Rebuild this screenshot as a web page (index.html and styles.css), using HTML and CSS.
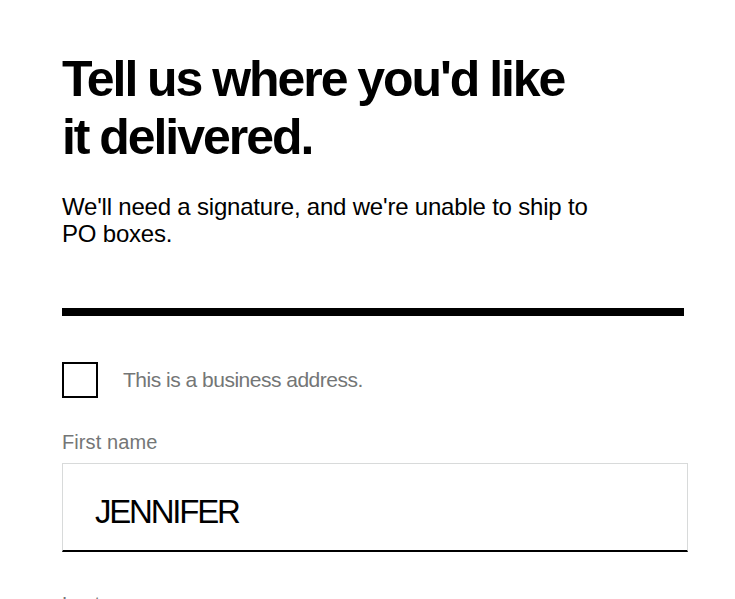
FILE: index.html
```html
<!DOCTYPE html>
<html lang="en">
  <head>
    <meta charset="UTF-8" />
    <meta name="viewport" content="width=device-width, initial-scale=1.0" />
    <title>Shipping Address</title>
    <link rel="stylesheet" href="styles.css">
  </head>

  <body>
    <main class="shipping">
      <h1 class="shipping-title">Tell us where you'd like<br />it delivered.</h1>
      <p class="shipping-note">We'll need a signature, and we're unable to ship to<br />PO boxes.</p>

      <hr class="divider" />

      <form class="address-form" action="" name="address_form">
        <label class="check-row" for="business">
          <input type="checkbox" id="business" name="business" class="check-box" />
          <span class="check-text">This is a business address.</span>
        </label>

        <div class="field">
          <label class="field-label" for="first_name">First name</label>
          <input class="field-input" type="text" id="first_name" name="first_name" value="JENNIFER" />
        </div>

        <div class="field">
          <label class="field-label" for="last_name">Last name</label>
          <input class="field-input" type="text" id="last_name" name="last_name" value="" />
        </div>
      </form>
    </main>
  </body>
</html>
```

FILE: styles.css
```css
:root {
  box-sizing: border-box;
  --ink: #000;
  --muted: #747676;
  --line: #d8dada;
}
*,
*::before,
*::after {
  box-sizing: inherit;
}
body {
  margin: 0;
  background: #fff;
  color: var(--ink);
  font-family: "Liberation Sans", Arial, sans-serif;
}
.shipping {
  width: 626px;
  margin: 0 0 0 62px;
  padding-top: 50px;
}
.shipping-title {
  margin: 0;
  font-size: 50px;
  line-height: 58px;
  font-weight: 700;
  letter-spacing: -2.05px;
  word-spacing: -1px;
}
.shipping-note {
  margin: 27px 0 0;
  font-size: 24px;
  line-height: 27px;
  letter-spacing: -0.2px;
}
.divider {
  margin: 61px 4px 0 0;
  height: 8px;
  border: 0;
  background: var(--ink);
}
.address-form {
  display: flex;
  flex-direction: column;
}
.check-row {
  display: flex;
  align-items: center;
  gap: 25px;
  margin-top: 46px;
}
.check-box {
  appearance: none;
  margin: 0;
  width: 36px;
  height: 36px;
  border: 2px solid var(--ink);
  background: #fff;
}
.check-text {
  font-size: 21px;
  color: var(--muted);
  letter-spacing: -0.5px;
}
.field {
  display: flex;
  flex-direction: column;
  margin-top: 32px;
}
.field + .field {
  margin-top: 40px;
}
.field-label {
  font-size: 20px;
  line-height: 24px;
  color: var(--muted);
  letter-spacing: 0.1px;
  margin-bottom: 9px;
}
.field-input {
  height: 89px;
  padding: 9px 32px 0;
  border: 1px solid var(--line);
  border-bottom: 2px solid var(--ink);
  border-radius: 0;
  font-family: inherit;
  font-size: 33px;
  letter-spacing: -2.2px;
  color: var(--ink);
  outline: none;
}
```
